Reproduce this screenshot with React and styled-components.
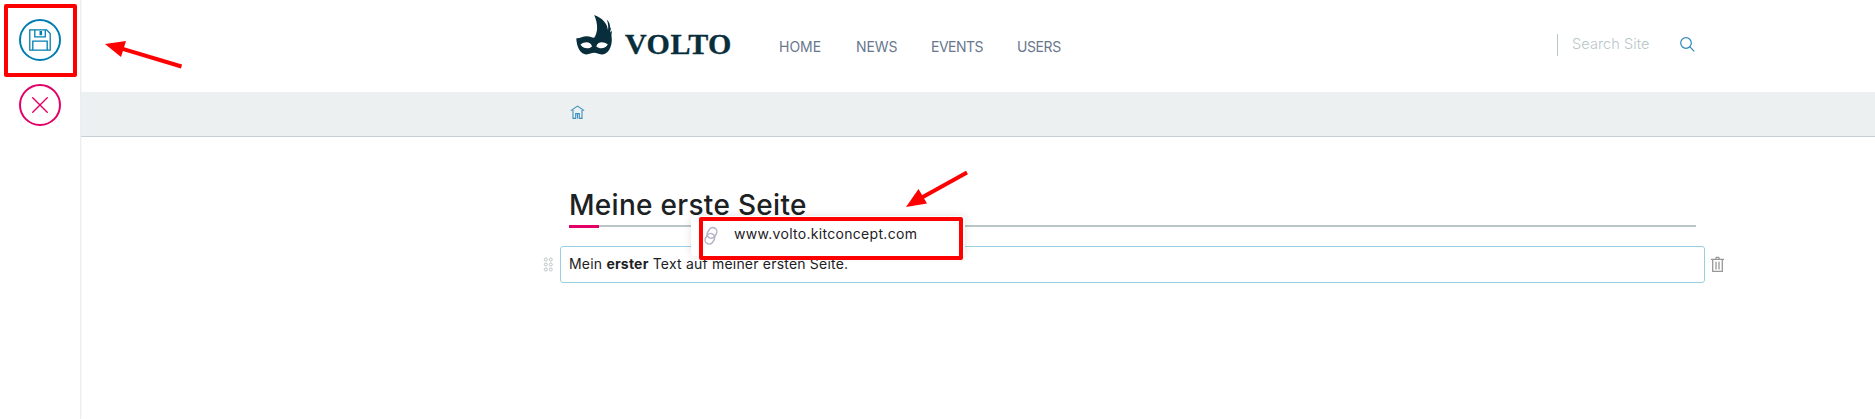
import React from 'react';
import styled, { createGlobalStyle } from 'styled-components';

const Global = createGlobalStyle`
  *, *::before, *::after { box-sizing: border-box; }
  body { margin: 0; background: #fff; color: #1c2124; font-family: Inter, "Open Sans", sans-serif; font-size: 14px; overflow: hidden; }
`;

const Shell = styled.div`position: relative; display: flex; height: 419px; overflow: hidden;`;
const Toolbar = styled.aside`
  width: 81px; flex: none; display: flex; flex-direction: column; align-items: center;
  gap: 23px; padding: 19px 0 0; border-right: 1px solid #e9eef2; box-shadow: 0 0 2px #e8edf1; z-index: 1;
`;
const ToolButton = styled.button`
  width: 42px; height: 42px; padding: 0; border-radius: 50%; background: none;
  border: 2px solid ${p => p.$color}; color: ${p => p.$color};
  display: flex; align-items: center; justify-content: center;
`;
const Main = styled.main`flex: 1; min-width: 0;`;
const Header = styled.header`height: 92px; padding: 0 179px 0 488px; display: flex; align-items: flex-start;`;
const Logo = styled.a`display: flex; align-items: flex-start; width: 210px; padding: 15px 0 0 7px; color: #082d3b;`;
const LogoText = styled.span`
  margin: 12px 0 0 12px; font: bold 30px/34px "Liberation Serif", serif; letter-spacing: 0.5px;
  -webkit-text-stroke: 0.3px #082d3b;
`;
const Nav = styled.nav`display: flex; padding-top: 37px; flex: 1;`;
const NavLink = styled.a`
  width: ${p => p.$w}px; color: #68778d; font-size: 14px; line-height: 20px; letter-spacing: ${p => p.$ls || 0}px; white-space: nowrap;
`;
const Search = styled.div`display: flex; align-items: flex-start; padding-top: 34px; width: 139px;`;
const SearchField = styled.div`
  border-left: 1px solid #b8c6c8; height: 22px; width: 123px; padding-left: 14px;
  color: #b8c6c8; font-size: 14.5px; font-weight: 300; line-height: 20px; letter-spacing: ${p => p.$ls}px;
`;
const SearchIcon = styled.svg`margin-top: 3px;`;
const Breadcrumbs = styled.div`height: 45px; background: #ecf0f1; border-bottom: 1px solid #c4d1d6; padding: 13px 0 0 489px;`;
const Content = styled.div`padding: 50px 0 0 479px;`;
const Title = styled.h1`
  margin: 0 0 0 9px; width: 1127px; height: 40px; border-bottom: 2px solid #b8c6c8;
  font-size: 28px; font-weight: 500; line-height: 36px; letter-spacing: ${p => p.$ls}px;
  position: relative;
  &::after { content: ''; position: absolute; left: 0; bottom: -3px; width: 30px; height: 3px; background: #e40166; }
`;
const BlockRow = styled.div`display: flex; align-items: center; margin: 19px 0 0 -17px; gap: 6px;`;
const TextBlock = styled.div`
  width: 1145px; height: 37px; border: 1px solid #9acfe3; border-radius: 3px; padding: 0 8px;
  line-height: 34px; font-size: 14px; letter-spacing: ${p => p.$ls}px;
`;
const LinkPopup = styled.div`
  position: absolute; left: 691px; top: 216px; width: 274px; height: 40px; background: #fff;
  border-radius: 3px; box-shadow: 0 0 8px rgba(0,0,0,.12);
  display: flex; align-items: flex-start; padding: 10px 0 0 12px; gap: 14px;
  font-size: 14px; line-height: 18px; letter-spacing: ${p => p.$ls}px;
`;
const PopupText = styled.span`margin-top: -1px;`;
const Highlight = styled.div`
  position: absolute; z-index: 3; border: 4px solid #f00; border-radius: 2px;
  left: ${p => p.$x}px; top: ${p => p.$y}px; width: ${p => p.$w}px; height: ${p => p.$h}px;
`;
const Arrow = styled.svg`position: absolute; z-index: 3; left: ${p => p.$x}px; top: ${p => p.$y}px;`;

const SaveIcon = () => (
  <svg width="22" height="22" viewBox="0 0 22 22" fill="none" stroke="currentColor" strokeWidth="1.3">
    <path d="M.8.8H17.6L21.2 4.5V21.2H.8ZM5.8.8V7.8H16.3V.8M3.8 21V12.2H18.2V21" />
    <path d="M11.8 2V6.2" strokeWidth="2.6" />
  </svg>
);
const CloseIcon = () => (
  <svg width="16" height="16" viewBox="0 0 16 16" stroke="currentColor" strokeWidth="1.4"><path d="M.3.3 15.7 15.7M15.7.3.3 15.7" /></svg>
);
const MaskIcon = () => (
  <svg width="37" height="40" viewBox="0 0 37 40" fill="currentColor">
    <path fillRule="evenodd" d="M18.2 0C26.5 3.2 31.2 8.2 32 15.3C32.6 12 32.1 8.2 30.8 4.6C33.4 7.1 34.4 10 34 13.2L35 12C34.8 14.3 34.4 16.2 34.1 17.4L36.1 15.7C35.6 18 35.2 20.4 35.8 23.4C36.2 31.8 32 39.4 25.6 39.4C22.2 39.4 21 37.8 18.2 37.8C15.3 37.8 13.8 39.4 10.4 39.4C4.2 39.4.5 31.5.3 23.2C2.8 24.1 6.5 21.2 10.8 21.2C14.2 21.2 15.6 22.7 18.2 22.7C21.9 17.6 22.3 9.2 18.2 0ZM4.5 29.5C6 33.2 12.5 34.7 16 31.4C14.7 26.5 9 26 4.5 29.5ZM20.3 31.4C24 34.7 30.1 33.1 31.8 29.5C27.4 26 21.6 26.5 20.3 31.4Z" />
  </svg>
);
const HomeIcon = () => (
  <svg width="15" height="15" viewBox="0 0 15 15" fill="none" stroke="#3d91bd" strokeWidth="1.1">
    <path d="M.8 5.6 7.5 1.1 14.2 5.6M3 5V13.4H5.7V8.6H9.3V13.4H12V5M7.5 9V13.5" />
  </svg>
);
const DragHandle = () => (
  <svg width="11" height="15" viewBox="0 0 11 15" fill="none" stroke="#b4bcbe" strokeWidth="0.9">
    {[2.5, 7.5, 12.5].map(y => [2.8, 7.8].map(x => <circle key={`${x}-${y}`} cx={x} cy={y} r="1.5" />))}
  </svg>
);
const TrashIcon = () => (
  <svg width="13" height="17" viewBox="0 0 13 17" fill="none" stroke="#989898" strokeWidth="1.3">
    <path d="M0 3.4H13M4.5 3.2 5.3 1.3H7.7L8.5 3.2M1.7 3.6V15.4H11.3V3.6M5 5.8V13.5M8 5.8V13.5" />
  </svg>
);
const ChainIcon = () => (
  <svg width="17" height="20" viewBox="0 0 17 20" fill="none" stroke="#b6b1c7" strokeWidth="1.5">
    <rect x="4.9" y="1.4" width="8.2" height="11" rx="4.1" transform="rotate(32 9 6.9)" />
    <rect x="2.8" y="7.3" width="8.2" height="11" rx="4.1" transform="rotate(32 6.9 12.8)" />
  </svg>
);

export default function App() {
  return (
    <Shell>
      <Global />
      <Toolbar>
        <ToolButton $color="#007eb1" aria-label="Save"><SaveIcon /></ToolButton>
        <ToolButton $color="#e40166" aria-label="Cancel"><CloseIcon /></ToolButton>
      </Toolbar>
      <Main>
        <Header>
          <Logo><MaskIcon /><LogoText>VOLTO</LogoText></Logo>
          <Nav>
            <NavLink $w={77}>HOME</NavLink>
            <NavLink $w={75} $ls={-0.1}>NEWS</NavLink>
            <NavLink $w={86} $ls={-0.5}>EVENTS</NavLink>
            <NavLink $w={60} $ls={-0.4}>USERS</NavLink>
          </Nav>
          <Search>
            <SearchField $ls={0.1}>Search Site</SearchField>
            <SearchIcon width="15" height="15" viewBox="0 0 15 15" fill="none" stroke="#3088bb" strokeWidth="1.2">
              <circle cx="6" cy="6" r="5.3" /><path d="M9.8 9.8 14.3 14.3" />
            </SearchIcon>
          </Search>
        </Header>
        <Breadcrumbs><HomeIcon /></Breadcrumbs>
        <Content>
          <Title $ls={0.3}>Meine erste Seite</Title>
          <BlockRow>
            <DragHandle />
            <TextBlock $ls={0.2}>Mein <b>erster</b> Text auf meiner ersten Seite.</TextBlock>
            <TrashIcon />
          </BlockRow>
        </Content>
      </Main>
      <LinkPopup $ls={0.3}><ChainIcon /><PopupText>www.volto.kitconcept.com</PopupText></LinkPopup>
      <Highlight $x={4} $y={4} $w={73} $h={73} />
      <Highlight $x={699} $y={217} $w={264} $h={43} />
      <Arrow $x={105} $y={40} width="78" height="29" fill="#f00">
        <path d="M0 4 21 1 16 17Z" /><path d="M16 8.4 76.5 26.5" stroke="#f00" strokeWidth="4" />
      </Arrow>
      <Arrow $x={906} $y={170} width="63" height="38" fill="#f00">
        <path d="M0 37 12.5 19 21 33.5Z" /><path d="M15 28 61 2.5" stroke="#f00" strokeWidth="4" />
      </Arrow>
    </Shell>
  );
}
